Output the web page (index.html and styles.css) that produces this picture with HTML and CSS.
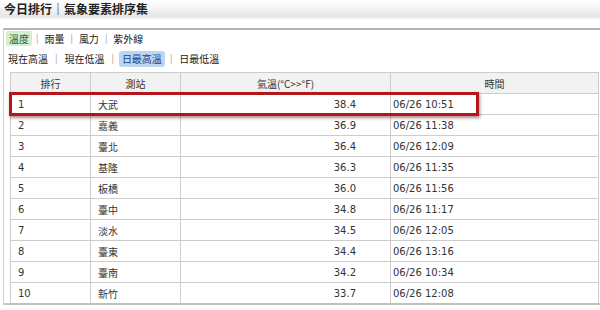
FILE: index.html
```html
<!DOCTYPE html>
<html lang="zh-Hant">
<head>
<meta charset="utf-8">
<link rel="stylesheet" href="styles.css">
</head>
<body>
<div class="page">
  <div class="title">今日排行｜氣象要素排序集</div>
  <div class="panel">
    <div class="tabs tabs-main">
      <span class="tab tab-green">溫度</span><span class="sep">|</span>
      <span class="tab">雨量</span><span class="sep">|</span>
      <span class="tab">風力</span><span class="sep">|</span>
      <span class="tab">紫外線</span>
    </div>
    <div class="tabs tabs-sub">
      <span class="tab">現在高溫</span><span class="sep">|</span>
      <span class="tab">現在低溫</span><span class="sep">|</span>
      <span class="tab tab-blue">日最高溫</span><span class="sep">|</span>
      <span class="tab">日最低溫</span>
    </div>
    <div class="table-wrap">
      <table class="rank">
        <colgroup>
          <col class="c1"><col class="c2"><col class="c3"><col class="c4">
        </colgroup>
        <thead>
          <tr><th>排行</th><th>測站</th><th>氣溫(°C&gt;&gt;°F)</th><th>時間</th></tr>
        </thead>
        <tbody>
          <tr><td>1</td><td>大武</td><td class="num">38.4</td><td class="time">06/26 10:51</td></tr>
          <tr><td>2</td><td>嘉義</td><td class="num">36.9</td><td class="time">06/26 11:38</td></tr>
          <tr><td>3</td><td>臺北</td><td class="num">36.4</td><td class="time">06/26 12:09</td></tr>
          <tr><td>4</td><td>基隆</td><td class="num">36.3</td><td class="time">06/26 11:35</td></tr>
          <tr><td>5</td><td>板橋</td><td class="num">36.0</td><td class="time">06/26 11:56</td></tr>
          <tr><td>6</td><td>臺中</td><td class="num">34.8</td><td class="time">06/26 11:17</td></tr>
          <tr><td>7</td><td>淡水</td><td class="num">34.5</td><td class="time">06/26 12:05</td></tr>
          <tr><td>8</td><td>臺東</td><td class="num">34.4</td><td class="time">06/26 13:16</td></tr>
          <tr><td>9</td><td>臺南</td><td class="num">34.2</td><td class="time">06/26 10:34</td></tr>
          <tr><td>10</td><td>新竹</td><td class="num">33.7</td><td class="time">06/26 12:08</td></tr>
        </tbody>
      </table>
      <div class="highlight"></div>
    </div>
  </div>
</div>
</body>
</html>
```
FILE: styles.css
```css
html, body {
  margin: 0;
  padding: 0;
  background: #ffffff;
}
body {
  font-family: "DejaVu Sans", "Noto Sans CJK TC", sans-serif;
  font-size: 10px;
  color: #333333;
  width: 600px;
  height: 310px;
  overflow: hidden;
}
.title {
  height: 17px;
  line-height: 18px;
  padding-left: 4px;
  font-family: "Noto Sans CJK TC", sans-serif;
  font-size: 12px;
  font-weight: bold;
  color: #222222;
  background: linear-gradient(#ffffff 0%, #f6f6f6 45%, #e4e4e4 100%);
  border-bottom: 2px solid #f0f0f0;
}
.panel {
  margin-top: 9px;
  margin-left: 3px;
  border-top: 2px solid #b4b4b4;
  border-left: 1px solid #cfcfcf;
  border-bottom: 2px solid #c8c8c8;
  height: 273px;
  position: relative;
}
.tabs {
  display: flex;
  align-items: center;
  font-family: "Noto Sans CJK TC", sans-serif;
  font-size: 10px;
  color: #222222;
}
.tabs-main {
  height: 16px;
  margin-top: 0px;
  padding-left: 2px;
}
.tabs-sub {
  height: 17px;
  margin-top: 4px;
  padding-left: 2px;
}
.tab {
  padding: 0 2px;
  line-height: 15px;
  border-radius: 2px;
}
.tab-green {
  background: #d3efcf;
  color: #1f5f3a;
  padding: 0 3px;
}
.tab-blue {
  background: #bcd6f2;
  color: #1c3f8c;
  padding: 0 3px;
  line-height: 16px;
  border-radius: 3px;
}
.sep {
  color: #9a9a9a;
  padding: 0 4px;
  font-size: 9px;
}
.tabs-sub .sep {
  padding: 0 5px;
}
.table-wrap {
  position: relative;
  margin-top: 5px;
  margin-left: 6px;
  width: 588px;
}
.rank {
  border-collapse: collapse;
  width: 588px;
  table-layout: fixed;
}
.c1 { width: 80px; }
.c2 { width: 90px; }
.c3 { width: 210px; }
.c4 { width: 208px; }
.rank th,
.rank td {
  border: 1px solid #cdcdcd;
  height: 20px;
  padding: 0 7px;
  text-align: left;
  white-space: nowrap;
}
.rank th {
  background: #f2f2f2;
  font-weight: normal;
  text-align: center;
  font-family: "Noto Sans CJK TC", sans-serif;
  color: #333333;
}
.rank td {
  font-family: "DejaVu Sans", "Noto Sans CJK TC", sans-serif;
}
.rank td.num {
  text-align: right;
  padding-right: 34px;
}
.rank td.time {
  padding-left: 2px;
}
.rank tr:last-child td {
  border-bottom: 2px solid #c0c0c0;
}
.highlight {
  position: absolute;
  left: -1px;
  top: 20px;
  width: 464px;
  height: 18px;
  border: 3px solid #b3161b;
  box-shadow: 1px 2px 3px rgba(80, 0, 0, 0.45);
  pointer-events: none;
}
```
